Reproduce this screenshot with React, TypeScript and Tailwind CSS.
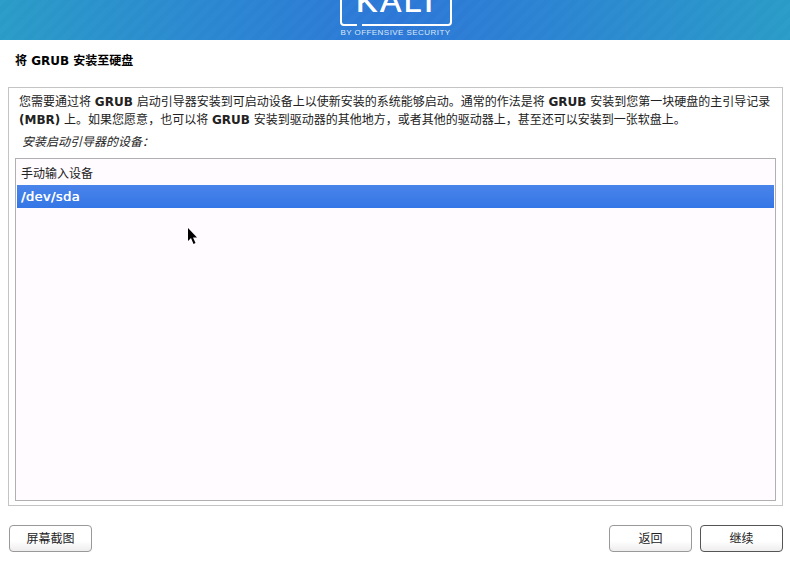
import React from 'react';

const font = "font-['DejaVu_Sans','Noto_Sans_CJK_SC',sans-serif]";

// full-width punctuation, as the installer shows it
const comma = '\uFF0C';
const colon = '\uFF1A';

const Button = ({ label, strong }: { label: string; strong?: boolean }) => (
  <button
    className={`w-[83px] h-[27px] rounded-[4px] border text-[12px] text-[#222] bg-gradient-to-b from-white from-60% to-[#efeded] ${
      strong ? 'border-[#555]' : 'border-[#999]'
    }`}
  >
    {label}
  </button>
);

export default function App() {
  return (
    <div className={`relative w-[790px] h-[564px] overflow-hidden bg-white flex flex-col ${font}`}>
      <header className="h-[40px] shrink-0 overflow-hidden flex flex-col items-center justify-end bg-[repeating-linear-gradient(135deg,rgba(255,255,255,0.012)_0px,rgba(255,255,255,0.012)_5px,rgba(0,0,0,0.008)_5px,rgba(0,0,0,0.008)_10px),linear-gradient(90deg,#2a9cc8_0%,#2c7ed6_40%,#2d78d8_50%,#2c7ed6_60%,#2a9cc8_100%)]">
        <div className="relative w-[112px] h-[26px] mb-[14px] ml-[1px]">
          <svg className="absolute inset-0" width="112" height="26" viewBox="0 0 112 26" fill="none">
            <path d="M1 0V22Q1 25 4 25H17M22 25H108Q111 25 111 22V0" stroke="#fff" strokeWidth="2" />
          </svg>
          <div className="absolute left-0 right-0 bottom-[9px] text-center text-[32px] leading-[32px] text-white [text-shadow:0.6px_0_0_#fff] font-['Liberation_Sans',sans-serif] tracking-[2.5px]">
            KALI
          </div>
          <div className="absolute left-0 right-0 top-[28px] text-center text-[8px] leading-[9px] whitespace-nowrap text-[#dce9f8] font-['Liberation_Sans',sans-serif] tracking-[0.45px]">
            BY OFFENSIVE SECURITY
          </div>
        </div>
      </header>

      <div className="h-[47px] shrink-0 pl-[15px] pt-[14px] text-[12px] leading-[14px] font-bold text-black">
        将 GRUB 安装至硬盘
      </div>

      <main className="mx-[8px] w-[775px] h-[419px] shrink-0 border border-[#c4c4c4] pl-[6px] pr-[6px] pt-[5px] pb-[4px] flex flex-col">
        <p className="pl-[4px] text-[12px] leading-[18px] text-[#222] whitespace-nowrap">
          您需要通过将 <b>GRUB</b> 启动引导器安装到可启动设备上以使新安装的系统能够启动。通常的作法是将 <b>GRUB</b> 安装到您第一块硬盘的主引导记录
          <br />
          <b>(MBR)</b> 上。如果您愿意{comma}也可以将 <b>GRUB</b> 安装到驱动器的其他地方{comma}或者其他的驱动器上{comma}甚至还可以安装到一张软盘上。
        </p>
        <p className="pl-[7px] mt-[4px] text-[12px] leading-[18px] italic text-[#222]">安装启动引导器的设备{colon}</p>
        <div className="mt-[7px] flex-1 border border-[#b0b0b0] bg-[#fffbff] px-[1px] pt-[4px]">
          <div className="h-[22px] pl-[4px] text-[12px] leading-[22px] text-[#222]">手动输入设备</div>
          <div className="h-[23px] pl-[4px] text-[13px] leading-[23px] tracking-[0.4px] [text-shadow:0.4px_0_0_#fff] text-white bg-gradient-to-b from-[#4a84ea] to-[#3476e6]">
            /dev/sda
          </div>
        </div>
      </main>

      <footer className="mt-[19px] px-[7px] pl-[9px] flex items-center">
        <Button label="屏幕截图" />
        <div className="ml-auto flex gap-[8px]">
          <Button label="返回" />
          <Button label="继续" strong />
        </div>
      </footer>

      <svg className="absolute left-[187px] top-[227px]" width="11" height="18" viewBox="0 0 11 18">
        <path d="M1 1V14L4 11L6.5 17L8.5 16L6 10.5H10Z" fill="#000" />
      </svg>
    </div>
  );
}
